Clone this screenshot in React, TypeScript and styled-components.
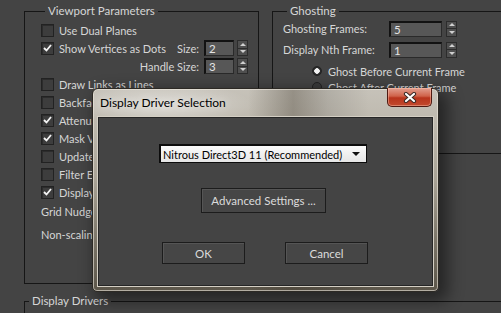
import * as React from "react";
import styled, { createGlobalStyle } from "styled-components";

const GlobalStyle = createGlobalStyle`
  html, body {
    margin: 0;
    padding: 0;
    background: #444444;
  }
  body {
    font-family: Lato, "Liberation Sans", Arial, sans-serif;
    font-size: 11px;
    color: #d6d6d6;
  }
`;

const Screen = styled.div`
  position: relative;
  width: 501px;
  height: 313px;
  overflow: hidden;
  background: #444444;
  box-sizing: border-box;
  padding: 4px 0 0 24px;
`;

const TopRow = styled.div`
  display: flex;
  align-items: flex-start;
  gap: 13px;
`;

const Group = styled.fieldset<{ $width: number; $height: number; $pad: string }>`
  box-sizing: border-box;
  flex-shrink: 0;
  min-width: 0;
  margin: 0;
  padding: ${(p) => p.$pad};
  width: ${(p) => p.$width}px;
  height: ${(p) => p.$height}px;
  border: 1px solid #161616;
`;

const BottomGroup = styled(Group)`
  margin-top: 10px;
`;

const Legend = styled.legend`
  margin-left: 4px;
  padding: 0 3px;
  line-height: 14px;
  font-size: 11.5px;
  color: #d6d6d6;
`;

const Row = styled.div<{ $h?: number; $top?: number; $indent?: number }>`
  display: flex;
  align-items: center;
  height: ${(p) => p.$h ?? 18}px;
  margin-top: ${(p) => p.$top ?? 0}px;
  padding-left: ${(p) => p.$indent ?? 0}px;
  white-space: nowrap;
`;

const Box = styled.span`
  box-sizing: border-box;
  flex: 0 0 13px;
  width: 13px;
  height: 13px;
  margin-right: 5px;
  display: flex;
  align-items: center;
  justify-content: center;
  border: 1px solid #222222;
  background: #3d3d3d;
  box-shadow: inset 1px 1px 0 #2c2c2c;
`;

const Spacer = styled.span`
  flex: 1;
`;

const SideLabel = styled.span`
  margin-right: 5px;
`;

const FieldLabel = styled.span`
  flex: 0 0 106px;
`;

const Field = styled.span<{ $w: number }>`
  box-sizing: border-box;
  width: ${(p) => p.$w}px;
  height: 16px;
  padding-left: 3px;
  line-height: 13px;
  font-size: 11.5px;
  background: #575757;
  color: #e4e4e4;
  border-top: 2px solid #121212;
  border-left: 2px solid #121212;
  border-right: 1px solid #2a2a2a;
  border-bottom: 1px solid #2a2a2a;
`;

const Arrows = styled.span<{ $gap: number }>`
  box-sizing: border-box;
  width: 11px;
  height: 16px;
  margin-left: ${(p) => p.$gap}px;
  display: flex;
  flex-direction: column;
  border: 1px solid #2c2c2c;
  background: #4f4f4f;
`;

const ArrowHalf = styled.span<{ $down?: boolean }>`
  flex: 1;
  display: flex;
  align-items: center;
  justify-content: center;
  & + & {
    border-top: 1px solid #2c2c2c;
  }
  &::after {
    content: "";
    border-left: 3px solid transparent;
    border-right: 3px solid transparent;
    ${(p) =>
      p.$down ? "border-top: 3px solid #d0d0d0;" : "border-bottom: 3px solid #d0d0d0;"}
  }
`;

const Radio = styled.span<{ $on?: boolean }>`
  box-sizing: border-box;
  flex: 0 0 10px;
  width: 10px;
  height: 10px;
  margin-right: 6px;
  border-radius: 50%;
  border: 1px solid #222222;
  background: ${(p) => (p.$on ? "radial-gradient(circle, #f2f2f2 0 2.5px, #2a2a2a 3px)" : "#3a3a3a")};
`;

/* dialog */

const Dialog = styled.div`
  position: absolute;
  left: 92px;
  top: 88px;
  width: 347px;
  height: 204px;
  box-sizing: border-box;
  display: flex;
  flex-direction: column;
  padding: 0 5px 5px 5px;
  border: 1px solid #2c2924;
  border-radius: 6px 6px 5px 5px;
  background:
    radial-gradient(ellipse 90px 22px at 70px 16px, rgba(255, 255, 255, 0.45), transparent),
    linear-gradient(
      to right,
      rgba(0, 0, 0, 0) 0%,
      rgba(0, 0, 0, 0) 45%,
      rgba(60, 52, 40, 0.35) 58%,
      rgba(0, 0, 0, 0.1) 68%,
      rgba(0, 0, 0, 0) 80%
    ),
    linear-gradient(to bottom, #c6c2b9 0%, #bdb8ad 18%, #a8a295 45%, #7b7568 75%, #5c564a 100%);
  box-shadow:
    inset 0 0 0 1px rgba(236, 232, 222, 0.6),
    6px 6px 16px 3px rgba(0, 0, 0, 0.45);
`;

const TitleBar = styled.div`
  display: flex;
  align-items: flex-start;
  height: 28px;
  flex-shrink: 0;
`;

const Title = styled.span`
  flex: 1;
  padding-left: 2px;
  line-height: 28px;
  font-size: 12px;
  color: #000000;
  white-space: nowrap;
  text-shadow: 0 0 8px rgba(255, 255, 255, 0.8);
`;

const CloseButton = styled.div`
  box-sizing: border-box;
  width: 45px;
  height: 19px;
  margin: -1px 1px 0 0;
  display: flex;
  align-items: center;
  justify-content: center;
  border: 1px solid #4e1a12;
  border-top: none;
  border-radius: 0 0 5px 5px;
  background: linear-gradient(to bottom, #e2a090 0%, #d0624a 45%, #b8341c 55%, #c24a2e 100%);
  box-shadow: inset 0 0 0 1px rgba(255, 200, 180, 0.45);
`;

const Client = styled.div`
  flex: 1;
  box-sizing: border-box;
  display: flex;
  flex-direction: column;
  align-items: flex-start;
  padding: 26px 0 0 60px;
  background: #444444;
  border: 1px solid #262626;
  box-shadow: 0 0 0 1px #d4cfc4;
`;

const Dropdown = styled.div`
  box-sizing: border-box;
  width: 208px;
  height: 19px;
  display: flex;
  align-items: center;
  padding: 0 6px 0 2px;
  border: 2px solid #0c0c0c;
  border-right-width: 1px;
  border-bottom-width: 1px;
  background: linear-gradient(to bottom, #fafafa, #e6e6e6);
  color: #000000;
  font-size: 11px;
  white-space: nowrap;
`;

const DropArrow = styled.span`
  margin-left: auto;
  border-left: 4px solid transparent;
  border-right: 4px solid transparent;
  border-top: 4px solid #111111;
`;

const Button = styled.div<{ $w: number; $h: number }>`
  box-sizing: border-box;
  width: ${(p) => p.$w}px;
  height: ${(p) => p.$h}px;
  display: flex;
  align-items: center;
  justify-content: center;
  border: 1px solid #1c1c1c;
  background: #464646;
  box-shadow: inset 1px 1px 0 #555555;
  color: #dcdcdc;
  font-size: 11.5px;
  white-space: nowrap;
`;

const AdvancedButton = styled(Button)`
  margin: 25px 0 0 42px;
`;

const ButtonRow = styled.div`
  display: flex;
  gap: 40px;
  margin: 29px 0 0 3px;
`;

function Check({ on }: { on?: boolean }) {
  return (
    <Box>
      {on && (
        <svg width="9" height="8" viewBox="0 0 9 8">
          <polyline points="1,4 3.5,6.5 8,1" fill="none" stroke="#f4f4f4" strokeWidth="1.8" />
        </svg>
      )}
    </Box>
  );
}

function Spin({ value, w, gap }: { value: string; w: number; gap: number }) {
  return (
    <>
      <Field $w={w}>{value}</Field>
      <Arrows $gap={gap}>
        <ArrowHalf />
        <ArrowHalf $down />
      </Arrows>
    </>
  );
}

const checks: [string, boolean][] = [
  ["Draw Links as Lines", false],
  ["Backface Cull", false],
  ["Attenuate Lights", true],
  ["Mask Viewport", true],
  ["Update Background", false],
  ["Filter Environment", false],
  ["Display World Axis", true],
];

export default function App() {
  return (
    <Screen>
      <GlobalStyle />
      <TopRow>
        <Group $width={235} $height={280} $pad="3px 10px 0 16px">
          <Legend>Viewport Parameters</Legend>
          <Row>
            <Check />
            Use Dual Planes
          </Row>
          <Row>
            <Check on />
            Show Vertices as Dots
            <Spacer />
            <SideLabel>Size:</SideLabel>
            <Spin value="2" w={30} gap={3} />
          </Row>
          <Row>
            <Spacer />
            <SideLabel>Handle Size:</SideLabel>
            <Spin value="3" w={30} gap={3} />
          </Row>
          {checks.map(([label, on]) => (
            <Row key={label}>
              <Check on={on} />
              {label}
            </Row>
          ))}
          <Row $top={1}>Grid Nudge Distance:</Row>
          <Row $top={5}>Non-scaling Object Size:</Row>
        </Group>
        <Group $width={260} $height={150} $pad="2px 0 0 10px">
          <Legend>Ghosting</Legend>
          <Row $h={17}>
            <FieldLabel>Ghosting Frames:</FieldLabel>
            <Spin value="5" w={53} gap={4} />
          </Row>
          <Row $h={17} $top={4}>
            <FieldLabel>Display Nth Frame:</FieldLabel>
            <Spin value="1" w={53} gap={4} />
          </Row>
          <Row $h={16} $top={5} $indent={29}>
            <Radio $on />
            Ghost Before Current Frame
          </Row>
          <Row $h={16} $indent={29}>
            <Radio />
            Ghost After Current Frame
          </Row>
        </Group>
      </TopRow>
      <BottomGroup $width={520} $height={40} $pad="0">
        <Legend>Display Drivers</Legend>
      </BottomGroup>

      <Dialog>
        <TitleBar>
          <Title>Display Driver Selection</Title>
          <CloseButton>
            <svg width="14" height="11" viewBox="0 0 14 11">
              <path d="M3 2 L11 9 M11 2 L3 9" stroke="#3a2a26" strokeWidth="4.2" strokeLinecap="round" />
              <path d="M3 2 L11 9 M11 2 L3 9" stroke="#ffffff" strokeWidth="2.2" strokeLinecap="round" />
            </svg>
          </CloseButton>
        </TitleBar>
        <Client>
          <Dropdown>
            Nitrous Direct3D 11 (Recommended)
            <DropArrow />
          </Dropdown>
          <AdvancedButton $w={125} $h={25}>Advanced Settings ...</AdvancedButton>
          <ButtonRow>
            <Button $w={83} $h={22}>OK</Button>
            <Button $w={83} $h={22}>Cancel</Button>
          </ButtonRow>
        </Client>
      </Dialog>
    </Screen>
  );
}
